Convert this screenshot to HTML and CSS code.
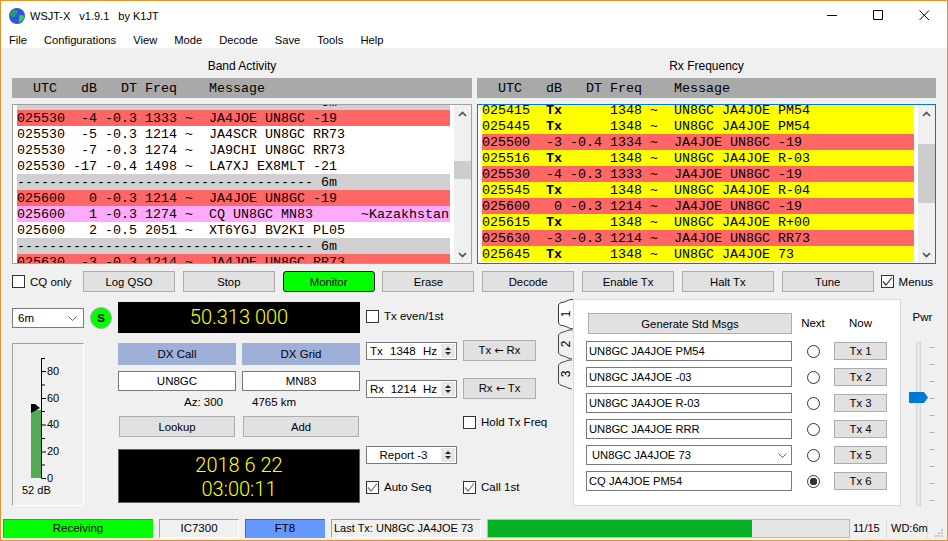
FILE: index.html
```html
<!DOCTYPE html>
<html lang="en">
<head>
  <meta charset="UTF-8">
  <title>WSJT-X v1.9.1 by K1JT</title>
  <link rel="stylesheet" href="styles.css">
</head>
<body>
<div class="window">
  <div class="titlebar">
    <svg class="app-icon" width="16" height="16" viewBox="0 0 16 16">
      <circle cx="8" cy="8" r="8" fill="#2c55e8"/>
      <path d="M3 3 C6 1 9 2 9 4 C9 6 6 6 6 8 C6 10 3 9 1 8 C1 6 2 4 3 3Z" fill="#2f9a5f"/>
      <path d="M10 8 C12 6 15 7 15 9 C15 12 12 14 10 14 C9 12 11 10 10 8Z" fill="#35d24a"/>
    </svg>
    <span class="title-text">WSJT-X</span>
    <span class="title-text">v1.9.1</span>
    <span class="title-text">by K1JT</span>
    <div class="win-controls">
      <svg width="11" height="11" viewBox="0 0 11 11"><path d="M0 5.5H10" stroke="#000" fill="none"/></svg>
      <svg width="11" height="11" viewBox="0 0 11 11"><path d="M.5 .5H9.5V9.5H.5Z" stroke="#000" fill="none"/></svg>
      <svg width="11" height="11" viewBox="0 0 11 11"><path d="M.5 .5L10 10M10 .5L.5 10" stroke="#000" fill="none"/></svg>
    </div>
  </div>
  <div class="menubar">
    <span>File</span><span>Configurations</span><span>View</span><span>Mode</span><span>Decode</span><span>Save</span><span>Tools</span><span>Help</span>
  </div>

  <div class="content">
    <div class="panes">
      <div class="pane-col">
        <div class="pane-title">Band Activity</div>
        <div class="col-header">  UTC   dB   DT Freq    Message</div>
        <div class="decodes">
          <div class="rows band-rows">
            <div class="row sep">------------------------------------- 6m</div>
            <div class="row red">025530  -4 -0.3 1333 ~  JA4JOE UN8GC -19</div>
            <div class="row">025530  -5 -0.3 1214 ~  JA4SCR UN8GC RR73</div>
            <div class="row">025530  -7 -0.3 1274 ~  JA9CHI UN8GC RR73</div>
            <div class="row">025530 -17 -0.4 1498 ~  LA7XJ EX8MLT -21</div>
            <div class="row sep">------------------------------------- 6m</div>
            <div class="row red">025600   0 -0.3 1214 ~  JA4JOE UN8GC -19</div>
            <div class="row pink">025600   1 -0.3 1274 ~  CQ UN8GC MN83      ~Kazakhstan</div>
            <div class="row">025600   2 -0.5 2051 ~  XT6YGJ BV2KI PL05</div>
            <div class="row sep">------------------------------------- 6m</div>
            <div class="row red">025630  -3 -0.3 1214 ~  JA4JOE UN8GC RR73</div>
          </div>
          <div class="scrollbar">
            <svg class="arrow" width="9" height="6" viewBox="0 0 9 6"><path d="M1 5L4.5 1.5L8 5" fill="none" stroke="#505050" stroke-width="1.6"/></svg>
            <div class="thumb thumb-band"></div>
            <svg class="arrow arrow-down" width="9" height="6" viewBox="0 0 9 6"><path d="M1 1L4.5 4.5L8 1" fill="none" stroke="#505050" stroke-width="1.6"/></svg>
          </div>
        </div>
      </div>
      <div class="pane-col">
        <div class="pane-title">Rx Frequency</div>
        <div class="col-header">  UTC   dB   DT Freq    Message</div>
        <div class="decodes focused">
          <div class="rows rx-rows">
            <div class="row yellow">025415  <b>Tx</b>      1348 ~  UN8GC JA4JOE PM54</div>
            <div class="row yellow">025445  <b>Tx</b>      1348 ~  UN8GC JA4JOE PM54</div>
            <div class="row red">025500  -3 -0.4 1334 ~  JA4JOE UN8GC -19</div>
            <div class="row yellow">025516  <b>Tx</b>      1348 ~  UN8GC JA4JOE R-03</div>
            <div class="row red">025530  -4 -0.3 1333 ~  JA4JOE UN8GC -19</div>
            <div class="row yellow">025545  <b>Tx</b>      1348 ~  UN8GC JA4JOE R-04</div>
            <div class="row red">025600   0 -0.3 1214 ~  JA4JOE UN8GC -19</div>
            <div class="row yellow">025615  <b>Tx</b>      1348 ~  UN8GC JA4JOE R+00</div>
            <div class="row red">025630  -3 -0.3 1214 ~  JA4JOE UN8GC RR73</div>
            <div class="row yellow">025645  <b>Tx</b>      1348 ~  UN8GC JA4JOE 73</div>
          </div>
          <div class="scrollbar">
            <svg class="arrow" width="9" height="6" viewBox="0 0 9 6"><path d="M1 5L4.5 1.5L8 5" fill="none" stroke="#505050" stroke-width="1.6"/></svg>
            <div class="thumb thumb-rx"></div>
            <svg class="arrow arrow-down" width="9" height="6" viewBox="0 0 9 6"><path d="M1 1L4.5 4.5L8 1" fill="none" stroke="#505050" stroke-width="1.6"/></svg>
          </div>
        </div>
      </div>
    </div>

    <div class="button-row">
      <label class="check cq-only"><span class="box"></span>CQ only</label>
      <div class="btn-group">
        <button class="btn">Log QSO</button>
        <button class="btn">Stop</button>
        <button class="btn monitor">Monitor</button>
        <button class="btn">Erase</button>
        <button class="btn">Decode</button>
        <button class="btn">Enable Tx</button>
        <button class="btn">Halt Tx</button>
        <button class="btn">Tune</button>
      </div>
      <label class="check menus"><span class="box checked"><svg width="11" height="11" viewBox="0 0 11 11"><path d="M1 5.5L4 9L10 1.5" fill="none" stroke="#333" stroke-width="1.2"/></svg></span>Menus</label>
    </div>

    <div class="lower">
      <div class="col-band">
        <div class="band-line">
          <div class="combo band-combo">6m<svg width="9" height="5" viewBox="0 0 9 5"><path d="M.5 .5L4.5 4.5L8.5 .5" fill="none" stroke="#606060"/></svg></div>
          <div class="s-light">S</div>
        </div>
        <div class="meter">
          <svg width="70" height="161" viewBox="0 0 70 161">
            <rect x="18" y="66" width="10.5" height="68" fill="#55aa55"/>
            <path d="M18 60L22 60L27 64L18 69Z" fill="#000"/>
            <path d="M28.5 14V134.5M28.5 14.500H32M28.5 27.500H33M28.500 41H32M28.500 54.500H33M28.500 67.500H32M28.500 81H33M28.500 94.500H32M28.500 108H33M28.500 121H32M28.500 134.500H33" stroke="#000" fill="none"/>
            <text class="scale" x="34" y="31">80</text>
            <text class="scale" x="34" y="58">60</text>
            <text class="scale" x="34" y="84">40</text>
            <text class="scale" x="34" y="111">20</text>
            <text class="scale" x="34" y="138">0</text>
            <text class="scale" x="9" y="150">52 dB</text>
          </svg>
        </div>
      </div>

      <div class="col-dx">
        <div class="freq-display">50.313 000</div>
        <div class="dx-grid">
          <div class="dx-label">DX Call</div>
          <div class="dx-label">DX Grid</div>
          <div class="dx-input">UN8GC</div>
          <div class="dx-input">MN83</div>
          <div class="dx-info az">Az: 300</div>
          <div class="dx-info km">4765 km</div>
          <button class="btn dx-btn">Lookup</button>
          <button class="btn dx-btn">Add</button>
        </div>
        <div class="clock">2018 6 22<br>03:00:11</div>
      </div>

      <div class="col-freq">
        <div class="freq-row row-even"><label class="check"><span class="box"></span>Tx even/1st</label></div>
        <div class="freq-row row-tx">
          <div class="spin"><span class="spin-text"><span>Tx</span><span>1348</span><span>Hz</span></span><span class="spin-arrows"><i class="up"></i><i class="down"></i></span></div>
          <button class="btn set-btn">Tx <span class="left-arrow">←</span> Rx</button>
        </div>
        <div class="freq-row row-rx">
          <div class="spin"><span class="spin-text"><span>Rx</span><span>1214</span><span>Hz</span></span><span class="spin-arrows"><i class="up"></i><i class="down"></i></span></div>
          <button class="btn set-btn">Rx <span class="left-arrow">←</span> Tx</button>
        </div>
        <div class="freq-row row-hold"><span></span><label class="check"><span class="box"></span>Hold Tx Freq</label></div>
        <div class="freq-row row-report">
          <div class="spin"><span class="spin-text report">Report -3</span><span class="spin-arrows"><i class="up"></i><i class="down"></i></span></div>
        </div>
        <div class="freq-row row-seq">
          <label class="check"><span class="box checked"><svg width="11" height="11" viewBox="0 0 11 11"><path d="M1 5.500L4 9L10 1.500" fill="none" stroke="#777" stroke-width="1.2"/></svg></span>Auto Seq</label>
          <label class="check"><span class="box checked"><svg width="11" height="11" viewBox="0 0 11 11"><path d="M1 5.500L4 9L10 1.500" fill="none" stroke="#777" stroke-width="1.2"/></svg></span>Call 1st</label>
        </div>
      </div>

      <div class="tabs">
        <svg width="15" height="92" viewBox="0 0 15 92">
          <path d="M15 .5C9 .5 9 3 4 3.500C1.500 4 .5 5 .5 7V23C.5 25 1.500 26 4 26.500C9 27 9 29 15 30" fill="#fff" stroke="#333"/>
          <path d="M14 31C9 31 9 32 5 33C2 34 .5 35 .5 37V53C.5 55 2 56 5 57C9 58 9 59 14 60" fill="#f0f0f0" stroke="#444"/>
          <path d="M14 61C9 61 9 62 5 63C2 64 .5 65 .5 67V83C.5 85 2 86 5 87C9 88 9 89 14 90" fill="#f0f0f0" stroke="#444"/>
          <text class="tab-num" transform="translate(12 15) rotate(-90)">1</text>
          <text class="tab-num" transform="translate(12 45) rotate(-90)">2</text>
          <text class="tab-num" transform="translate(12 75) rotate(-90)">3</text>
        </svg>
      </div>

      <div class="msg-panel">
        <button class="btn gen-btn">Generate Std Msgs</button>
        <div class="msg-head">Next</div>
        <div class="msg-head">Now</div>

        <div class="msg-input">UN8GC JA4JOE PM54</div>
        <span class="radio"></span>
        <button class="btn tx-btn">Tx 1</button>

        <div class="msg-input">UN8GC JA4JOE -03</div>
        <span class="radio"></span>
        <button class="btn tx-btn">Tx 2</button>

        <div class="msg-input">UN8GC JA4JOE R-03</div>
        <span class="radio"></span>
        <button class="btn tx-btn">Tx 3</button>

        <div class="msg-input">UN8GC JA4JOE RRR</div>
        <span class="radio"></span>
        <button class="btn tx-btn">Tx 4</button>

        <div class="msg-input msg-combo">UN8GC JA4JOE 73<svg width="9" height="5" viewBox="0 0 9 5"><path d="M.5 .5L4.500 4.500L8.500 .5" fill="none" stroke="#606060"/></svg></div>
        <span class="radio"></span>
        <button class="btn tx-btn">Tx 5</button>

        <div class="msg-input msg-cq">CQ JA4JOE PM54</div>
        <span class="radio selected"></span>
        <button class="btn tx-btn">Tx 6</button>
      </div>

      <div class="col-pwr">
        <div class="pwr-label">Pwr</div>
        <svg width="35" height="165" viewBox="0 0 35 165">
          <rect x="15.500" y=".5" width="4" height="163" fill="#e7e7e7" stroke="#d6d6d6"/>
          <path d="M28.500 5.500H33.500M28.500 22.500H33.500M28.500 39.500H33.500M28.500 56.500H33.500M28.500 73.500H33.500M28.500 90.500H33.500M28.500 107.500H33.500M28.500 124.500H33.500M28.500 141.500H33.500M28.500 158.500H33.500" stroke="#b0b0b0" fill="none"/>
          <path d="M8 50H23L27 55.500L23 61H8Z" fill="#0078d7"/>
        </svg>
      </div>
    </div>
  </div>

  <div class="statusbar">
    <div class="status receiving">Receiving</div>
    <div class="status rig">IC7300</div>
    <div class="status mode">FT8</div>
    <div class="status last-tx">Last Tx: UN8GC JA4JOE 73</div>
    <div class="progress"><div class="progress-fill" style="width: 73%"></div></div>
    <div class="status-text count">11/15</div>
    <div class="status-text wd">WD:6m</div>
    <svg class="grip" width="10" height="10" viewBox="0 0 10 10"><path d="M7 1h2v2h-2zM4 4h2v2h-2zM7 4h2v2h-2zM1 7h2v2h-2zM4 7h2v2h-2zM7 7h2v2h-2z" fill="#c4c4c4"/></svg>
  </div>
</div>
</body>
</html>
```

FILE: styles.css
```css
body {
  margin: 0;
  font-family: "Liberation Sans", Arial, sans-serif;
  font-size: 11.5px;
  color: #000;
}
.window {
  width: 948px;
  height: 541px;
  box-sizing: border-box;
  border: 1px solid #e6952c;
  background-color: #f0f0f0;
  overflow: hidden;
}

/* title and menu */
.titlebar {
  height: 29px;
  background-color: #fff;
  display: flex;
  align-items: center;
  padding-left: 8px;
}
.app-icon {
  margin-right: 5px;
}
.title-text {
  font-size: 11px;
  margin-right: 9px;
}
.win-controls {
  margin-left: auto;
  display: flex;
  gap: 35px;
  padding-right: 17px;
}
.menubar {
  height: 18px;
  box-sizing: border-box;
  background-color: #fff;
  display: flex;
  gap: 17px;
  padding: 2px 0 0 8px;
  font-size: 11.2px;
  line-height: 16px;
}

.content {
  padding: 0 11px;
}

/* decoded text panes */
.panes {
  display: grid;
  grid-template-columns: 460px 459px;
  gap: 5px;
}
.pane-title {
  height: 30px;
  line-height: 36px;
  font-size: 12px;
  text-align: center;
}
.col-header {
  height: 20px;
  line-height: 21px;
  background-color: #a9a9a9;
  font-family: "Liberation Mono", monospace;
  font-size: 13.33px;
  white-space: pre;
  padding-left: 5px;
}
.decodes {
  margin-top: 6px;
  height: 160px;
  box-sizing: border-box;
  border: 1px solid #a0a0a0;
  background-color: #fff;
  display: flex;
  overflow: hidden;
}
.decodes.focused {
  border-color: #0078d7;
}
.rows {
  flex: 1;
  margin-left: 4px;
  margin-right: 4px;
  font-family: "Liberation Mono", monospace;
  font-size: 13.33px;
}
.band-rows {
  margin-top: -11px;
}
.rx-rows {
  margin-top: -3px;
}
.row {
  height: 16px;
  line-height: 17px;
  white-space: pre;
  overflow: hidden;
}
.row b {
  font-weight: bold;
}
.row.red {
  background-color: #ff6666;
}
.row.pink {
  background-color: #ffaaff;
}
.row.yellow {
  background-color: #ffff00;
}
.row.sep {
  background-color: #d0d0d0;
}
.scrollbar {
  width: 17px;
  flex-shrink: 0;
  background-color: #f0f0f0;
  display: flex;
  flex-direction: column;
  align-items: center;
  padding-top: 6px;
}
.arrow-down {
  margin-top: auto;
  margin-bottom: 5px;
}
.thumb {
  width: 100%;
  background-color: #cdcdcd;
}
.thumb-band {
  margin-top: 44px;
  height: 18px;
}
.thumb-rx {
  margin-top: 27px;
  height: 59px;
}

/* buttons */
.btn {
  font-family: inherit;
  font-size: 11.3px;
  color: #000;
  background-color: #e1e1e1;
  border: 1px solid #adadad;
  padding: 0;
  height: 21px;
}
.button-row {
  margin-top: 7px;
  height: 21px;
  display: flex;
  align-items: center;
}
.cq-only {
  width: 71px;
}
.btn-group {
  display: flex;
  gap: 7.8px;
}
.btn-group .btn {
  width: 92px;
}
.btn.monitor {
  background-color: #00ff00;
  border-color: #1c1c1c;
  border-radius: 3px;
}
.menus {
  margin-left: 7px;
}
.check {
  display: flex;
  align-items: center;
  gap: 5px;
  white-space: nowrap;
}
.box {
  width: 13px;
  height: 13px;
  box-sizing: border-box;
  border: 1px solid #333;
  background-color: #fff;
  display: flex;
  flex-shrink: 0;
}
.box svg {
  display: block;
}

/* lower half */
.lower {
  margin-top: 7px;
  display: flex;
  height: 213px;
}
.col-band {
  width: 106px;
  padding-top: 8px;
  box-sizing: border-box;
}
.band-line {
  display: flex;
  align-items: center;
  gap: 6px;
}
.combo {
  box-sizing: border-box;
  border: 1px solid #7a7a7a;
  background-color: #fff;
  display: flex;
  align-items: center;
  justify-content: space-between;
}
.band-combo {
  width: 72px;
  height: 20px;
  padding: 0 6px 0 5px;
}
.s-light {
  width: 22px;
  height: 22px;
  box-sizing: border-box;
  border: 1px solid #a8a8a8;
  border-radius: 50%;
  background-color: #00ff00;
  font-weight: bold;
  text-align: center;
  line-height: 20px;
}
.meter {
  margin-top: 14px;
  width: 72px;
  height: 163px;
  box-sizing: border-box;
  border: 1px solid;
  border-color: #a0a0a0 #fff #fff #a0a0a0;
}
.meter svg {
  display: block;
}
.scale {
  font-size: 11px;
}

.col-dx {
  width: 242px;
  padding-top: 3px;
  box-sizing: border-box;
}
.freq-display {
  height: 31px;
  line-height: 31px;
  background-color: #000;
  color: #ffff00;
  font-family: Roboto, "Liberation Sans", sans-serif;
  font-weight: 300;
  font-size: 20px;
  text-align: center;
}
.dx-grid {
  margin-top: 10px;
  display: grid;
  grid-template-columns: 118px 118px;
  column-gap: 6px;
}
.dx-label {
  height: 22px;
  line-height: 22px;
  background-color: #9fb0d8;
  text-align: center;
}
.dx-input {
  margin-top: 6px;
  height: 20px;
  line-height: 18px;
  box-sizing: border-box;
  border: 1px solid #7a7a7a;
  background-color: #fff;
  text-align: center;
}
.dx-info {
  height: 25px;
  line-height: 22px;
}
.dx-info.az {
  padding-left: 66px;
}
.dx-info.km {
  padding-left: 10px;
}
.dx-btn {
  width: 116px;
  margin-left: 1px;
}
.clock {
  margin-top: 12px;
  height: 54px;
  box-sizing: border-box;
  border: 1px solid #606060;
  background-color: #000;
  color: #ffff00;
  font-family: Roboto, "Liberation Sans", sans-serif;
  font-weight: 300;
  font-size: 20px;
  line-height: 24px;
  padding-top: 3px;
  text-align: center;
}

.col-freq {
  width: 192px;
  margin-left: 6px;
  flex-shrink: 0;
}
.freq-row {
  display: grid;
  grid-template-columns: 97px auto;
  align-items: center;
  justify-items: start;
}
.row-even {
  margin-top: 9px;
  height: 16px;
}
.row-tx {
  margin-top: 16px;
  height: 21px;
}
.row-rx {
  margin-top: 17px;
  height: 21px;
}
.row-hold {
  margin-top: 15px;
  height: 16px;
}
.row-report {
  margin-top: 15px;
  height: 20px;
}
.row-seq {
  margin-top: 14px;
  height: 16px;
}
.spin {
  width: 91px;
  height: 18px;
  box-sizing: border-box;
  border: 1px solid #7a7a7a;
  background-color: #fff;
  display: flex;
  align-items: center;
  padding-left: 3px;
}
.spin-text {
  flex: 1;
  display: flex;
  justify-content: space-between;
  padding-right: 4px;
}
.spin-text.report {
  justify-content: center;
}
.spin-arrows {
  width: 14px;
  height: 14px;
  background-color: #e6e6e6;
  margin-right: 1px;
  display: flex;
  flex-direction: column;
  align-items: center;
  justify-content: center;
  gap: 2px;
}
.spin-arrows i {
  width: 0;
  height: 0;
  border-left: 3px solid transparent;
  border-right: 3px solid transparent;
}
.spin-arrows .up {
  border-bottom: 3px solid #222;
}
.spin-arrows .down {
  border-top: 3px solid #222;
}
.set-btn {
  width: 73px;
}
.left-arrow {
  font-family: "DejaVu Sans", sans-serif;
  font-size: 11px;
}

/* message tabs */
.tabs {
  width: 15px;
  flex-shrink: 0;
}
.tabs svg {
  display: block;
}
.tab-num {
  font-size: 12px;
  text-anchor: middle;
}
.msg-panel {
  width: 328px;
  height: 207px;
  box-sizing: border-box;
  border: 1px solid #d9d9d9;
  background-color: #fff;
  flex-shrink: 0;
  padding: 13px 0 0 12px;
  display: grid;
  grid-template-columns: 206px 42px 53px;
  grid-auto-rows: 26px;
  grid-template-rows: 25px;
  align-items: center;
  justify-items: center;
}
.gen-btn {
  width: 204px;
  align-self: start;
  justify-self: end;
}
.msg-head {
  align-self: start;
  line-height: 21px;
}
.msg-input {
  width: 206px;
  height: 20px;
  line-height: 18px;
  box-sizing: border-box;
  border: 1px solid #7a7a7a;
  background-color: #fff;
  padding-left: 2px;
  font-size: 11.2px;
  white-space: nowrap;
}
.msg-combo {
  display: flex;
  align-items: center;
  justify-content: space-between;
  padding: 0 4px 0 5px;
}
.msg-cq {
  padding-left: 2px;
}
.radio {
  width: 13px;
  height: 13px;
  box-sizing: border-box;
  border: 1px solid #333;
  border-radius: 50%;
  background-color: #fff;
  display: block;
}
.radio.selected {
  background: radial-gradient(circle, #333 0 3.5px, #fff 4px);
}
.tx-btn {
  width: 53px;
  height: 18px;
}
.col-pwr {
  width: 35px;
  flex-shrink: 0;
}
.pwr-label {
  height: 43px;
  box-sizing: border-box;
  padding-top: 12px;
  padding-left: 8px;
  text-align: center;
}
.col-pwr svg {
  display: block;
}

/* status bar */
.statusbar {
  margin-top: 7px;
  height: 19px;
  display: flex;
  align-items: center;
  padding-left: 2px;
  gap: 6px;
}
.status {
  height: 19px;
  line-height: 16px;
  box-sizing: border-box;
  border: 1px solid;
  border-color: #a0a0a0 #fff #fff #a0a0a0;
  text-align: center;
  flex-shrink: 0;
}
.receiving {
  width: 150px;
  background-color: #00ff00;
  border-color: #00c000 #00ff00 #00ff00 #00c000;
}
.rig {
  width: 80px;
}
.mode {
  width: 80px;
  background-color: #6699ff;
  border-color: #4466bb #6699ff #6699ff #4466bb;
}
.last-tx {
  width: 150px;
  text-align: left;
  padding-left: 2px;
  font-size: 11px;
  white-space: nowrap;
  overflow: hidden;
}
.progress {
  width: 363px;
  height: 19px;
  box-sizing: border-box;
  border: 1px solid #bcbcbc;
  background-color: #e6e6e6;
  flex-shrink: 0;
}
.progress-fill {
  height: 100%;
  background-color: #06b025;
}
.status-text {
  white-space: nowrap;
  font-size: 11px;
}
.count {
  width: 33px;
  margin-left: -3px;
  border-right: 1px solid #dcdcdc;
  line-height: 19px;
}
.wd {
  width: 36px;
  border-right: 1px solid #dcdcdc;
  line-height: 19px;
  margin-left: -2px;
}
.grip {
  margin-top: 8px;
}
```
